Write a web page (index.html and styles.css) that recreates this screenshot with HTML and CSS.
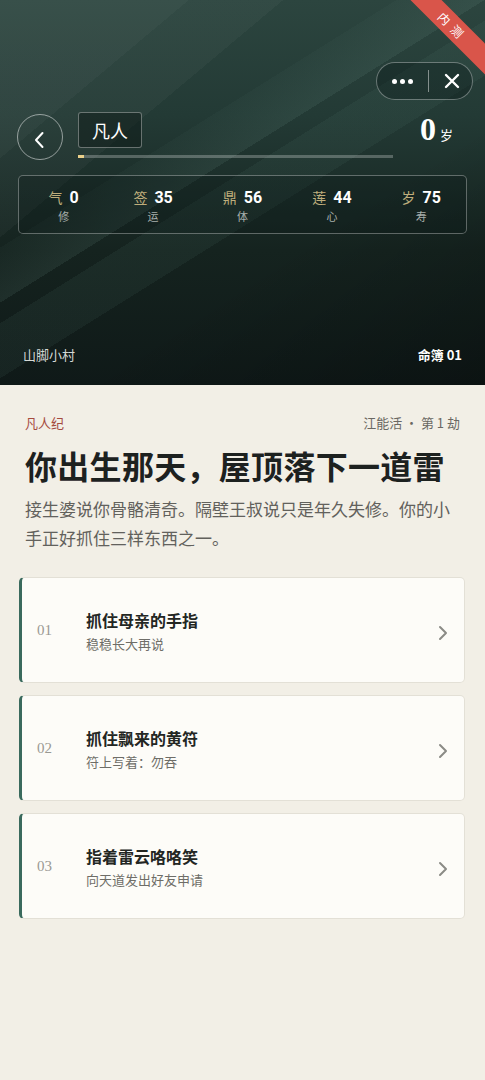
FILE: index.html
```html
<!DOCTYPE html>
<html lang="zh-CN">
<head>
<meta charset="UTF-8">
<title>凡人纪</title>
<link rel="stylesheet" href="styles.css">
</head>
<body>
<div class="hero">
	<div class="ribbon"><span>内测</span></div>
	<div class="capsule">
		<span class="dots"><i></i><i></i><i></i></span>
		<span class="bar"></span>
		<svg class="close" width="16" height="16" viewBox="0 0 16 16"><path d="M2 2L14 14M14 2L2 14" stroke="#fff" stroke-width="2.4" stroke-linecap="round"/></svg>
	</div>
	<div class="top">
		<div class="back"><svg width="12" height="18" viewBox="0 0 12 18"><path d="M9.5 2L3 9l6.5 7" fill="none" stroke="#fff" stroke-width="2" stroke-linecap="round" stroke-linejoin="round"/></svg></div>
		<div class="rank">
			<div class="tag">凡人</div>
			<div class="progress"><b></b></div>
		</div>
		<div class="age"><strong>0</strong><span>岁</span></div>
	</div>
	<dl class="stats">
		<dd><p><em>气</em><b>0</b></p><span>修</span></dd>
		<dd><p><em>签</em><b>35</b></p><span>运</span></dd>
		<dd><p><em>鼎</em><b>56</b></p><span>体</span></dd>
		<dd><p><em>莲</em><b>44</b></p><span>心</span></dd>
		<dd><p><em>岁</em><b>75</b></p><span>寿</span></dd>
	</dl>
	<div class="place"><span>山脚小村</span><b>命簿 01</b></div>
</div>

<div class="story">
	<div class="meta"><span class="era">凡人纪</span><span>江能活 · 第 1 劫</span></div>
	<h1>你出生那天，屋顶落下一道雷</h1>
	<p class="desc">接生婆说你骨骼清奇。隔壁王叔说只是年久失修。你的小手正好抓住三样东西之一。</p>
</div>

<ul class="choices">
	<li><span class="num">01</span><div class="txt"><h3>抓住母亲的手指</h3><p>稳稳长大再说</p></div><svg class="arrow" width="10" height="16" viewBox="0 0 10 16"><path d="M2 2l6 6-6 6" fill="none" stroke="#8b8b86" stroke-width="2" stroke-linecap="round" stroke-linejoin="round"/></svg></li>
	<li><span class="num">02</span><div class="txt"><h3>抓住飘来的黄符</h3><p>符上写着：勿吞</p></div><svg class="arrow" width="10" height="16" viewBox="0 0 10 16"><path d="M2 2l6 6-6 6" fill="none" stroke="#8b8b86" stroke-width="2" stroke-linecap="round" stroke-linejoin="round"/></svg></li>
	<li><span class="num">03</span><div class="txt"><h3>指着雷云咯咯笑</h3><p>向天道发出好友申请</p></div><svg class="arrow" width="10" height="16" viewBox="0 0 10 16"><path d="M2 2l6 6-6 6" fill="none" stroke="#8b8b86" stroke-width="2" stroke-linecap="round" stroke-linejoin="round"/></svg></li>
</ul>
</body>
</html>
```

FILE: styles.css
```css
html, body, div, dl, dd, ul, li, h1, h3, p { margin:0; padding:0; }
body { font:normal 14px "Noto Sans CJK SC", "Liberation Sans", sans-serif; background:#f2efe6; color:#222; }
ul li { list-style:none; }

/* hero */
.hero { position:relative; overflow:hidden; height:385px; box-sizing:border-box; padding:112px 18px 0 17px; display:flex; flex-direction:column; color:#fff;
	background:
		linear-gradient(148deg, rgba(255,255,255,0) 0, rgba(255,255,255,0) 62%, rgba(0,0,0,0.25) 100%),
		linear-gradient(-32deg, rgba(0,0,0,0) 0, rgba(0,0,0,0) 45%, rgba(90,130,118,0.10) 45%, rgba(90,130,118,0.10) 53%, rgba(0,0,0,0) 53%),
		linear-gradient(-32deg, rgba(0,0,0,0) 0, rgba(0,0,0,0) 56%, rgba(120,160,148,0.12) 56%, rgba(120,160,148,0.04) 64%, rgba(0,0,0,0) 64%),
		linear-gradient(-40deg, rgba(255,255,255,0) 0, rgba(255,255,255,0) 70%, rgba(255,255,255,0.03) 70%, rgba(255,255,255,0.03) 80%, rgba(255,255,255,0.06) 80%),
		linear-gradient(180deg, #2c453f 0, #233a35 30%, #15231f 65%, #0f1918 100%);
}
.ribbon { position:absolute; top:16px; right:-38px; width:140px; height:22px; background:#d9554a; transform:rotate(45deg); text-align:center; }
.ribbon span { display:inline-block; font-size:12px; line-height:22px; letter-spacing:6px; color:#fff; }
.capsule { position:absolute; top:62px; right:12px; width:95px; height:36px; border:1px solid rgba(255,255,255,0.35); border-radius:19px; background:rgba(10,24,22,0.35); display:flex; align-items:center; }
.capsule .dots { display:flex; gap:3px; margin-left:15px; }
.capsule .dots i { width:5px; height:5px; border-radius:50%; background:#fff; }
.capsule .bar { width:1px; height:22px; background:rgba(255,255,255,0.45); margin-left:15px; }
.capsule .close { margin-left:15px; }

.top { display:flex; align-items:flex-start; }
.back { width:44px; height:44px; margin-top:2px; border:1.5px solid rgba(255,255,255,0.5); border-radius:50%; display:flex; align-items:center; justify-content:center; }
.back svg { margin-top:6px; margin-right:2px; }
.rank { width:315px; margin-left:15px; }
.tag { display:inline-block; height:34px; padding:0 13px; border:1px solid rgba(255,255,255,0.35); border-radius:3px; background:rgba(10,22,20,0.45); font-size:18px; line-height:34px; }
.progress { height:3px; margin-top:7px; background:rgba(255,255,255,0.25); }
.progress b { display:block; width:6px; height:3px; background:#e9cf8a; }
.age { margin-left:auto; margin-right:14px; display:flex; align-items:baseline; }
.age strong { font:bold 32px "Liberation Serif", serif; line-height:34px; }
.age span { font-size:13px; margin-left:4px; }

.stats { display:grid; grid-template-columns:repeat(5, 1fr); height:59px; box-sizing:border-box; margin:15px 0 0 1px; padding-top:9px; border:1px solid rgba(255,255,255,0.32); border-radius:5px; background:rgba(8,20,18,0.25); }
.stats dd { text-align:center; }
.stats p { display:flex; justify-content:center; align-items:center; gap:7px; height:24px; }
.stats em { font-style:normal; font-size:14px; color:#bfae7c; }
.stats b { font:bold 16px "Roboto", "Liberation Sans", sans-serif; }
.stats span { display:block; font-size:11px; line-height:14px; color:#a7afab; }

.place { margin-top:auto; padding:0 5px 21px 6px; display:flex; justify-content:space-between; font-size:13px; line-height:18px; }
.place span { color:#d5d9d6; }
.place b { font-weight:bold; }

/* story */
.story { padding:28px 25px 0; }
.meta { display:flex; justify-content:space-between; font-size:13px; line-height:20px; color:#6a6862; }
.meta .era { color:#a54a3e; }
.story h1 { margin-top:11px; font-size:32px; line-height:42px; font-weight:bold; color:#1d211f; letter-spacing:0.3px; }
.desc { margin-top:8px; font-size:17px; line-height:29px; color:#62615c; }

.choices { padding:25px 20px 0 19px; }
.choices li { display:flex; align-items:center; height:106px; box-sizing:border-box; margin-bottom:12px; border:1px solid #e3e0d6; border-left:3px solid #3a6a5d; border-radius:5px; background:#fdfcf8; }
.num { width:49px; padding-left:15px; font:15px "Liberation Serif", serif; color:#9a9993; }
.txt { flex:1; }
.txt h3 { font-size:16px; line-height:24px; font-weight:bold; color:#232623; }
.txt p { margin-top:3px; font-size:13px; line-height:18px; color:#6e6d67; }
.arrow { margin-right:16px; margin-top:6px; }
```
